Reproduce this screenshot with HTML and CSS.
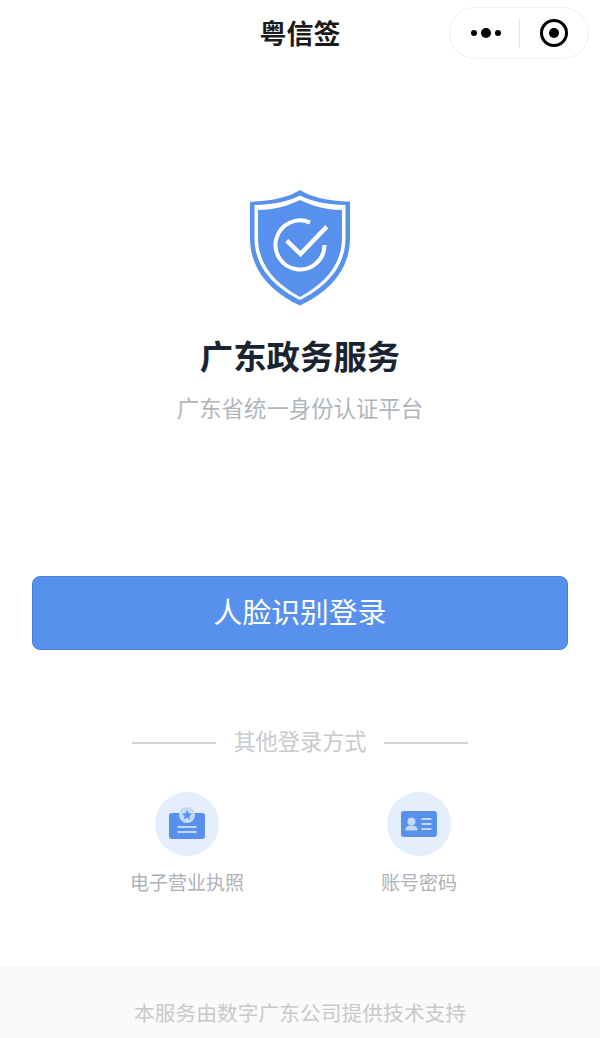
FILE: index.html
```html
<!DOCTYPE html>
<html lang="zh-CN">
<head>
    <meta charset="UTF-8">
    <meta name="viewport" content="width=device-width, initial-scale=1.0">
    <title>粤信签</title>
    <link rel="stylesheet" href="styles.css">
</head>
<body>
    <div class="page">
        <header class="navbar">
            <div class="nav-title">粤信签</div>
            <div class="capsule">
                <div class="capsule-more">
                    <span class="dot"></span><span class="dot dot-big"></span><span class="dot"></span>
                </div>
                <div class="capsule-line"></div>
                <div class="capsule-close"><span class="close-inner"></span></div>
            </div>
        </header>

        <section class="brand">
            <svg class="shield" width="102" height="116" viewBox="0 0 102 116">
                <path d="M51 0C40 7 24 11 1 11.700V48C1 80 22 102 51 115.500C80 102 101 80 101 48V11.700C78 11 62 7 51 0Z" fill="#5891ed"/>
                <path d="M51 5.500C40 11 26 14.500 5.500 15V48C5.500 77 25 97 51 110C77 97 96.500 77 96.500 48V15C76 14.500 62 11 51 5.500Z" fill="#fff"/>
                <path d="M51 10C41 15 28 19.500 9 20V48C9 75 27 94 51 107C75 94 93 75 93 48V20C74 19.500 61 15 51 10Z" fill="#5891ed"/>
                <path d="M61 32.600A24.500 24.500 0 1 0 75.500 55" fill="none" stroke="#fff" stroke-width="4"/>
                <path d="M37.700 50.700L51.500 64L77.700 36.700" fill="none" stroke="#fff" stroke-width="4.500"/>
            </svg>
            <h1 class="brand-title">广东政务服务</h1>
            <p class="brand-sub">广东省统一身份认证平台</p>
        </section>

        <button type="button" class="face-button">人脸识别登录</button>

        <div class="other-title">
            <span class="other-line"></span>
            <span class="other-text">其他登录方式</span>
            <span class="other-line"></span>
        </div>

        <div class="login-ways">
            <div class="way">
                <div class="way-icon">
                    <svg width="38" height="34" viewBox="0 0 38 34">
                        <rect x="1" y="6" width="36" height="26" rx="3" fill="#5891ed"/>
                        <circle cx="19" cy="8" r="8" fill="#c3d9f8"/>
                        <path d="M19 3L20.500 6.300L24 6.700L21.400 9L22.100 12.500L19 10.700L15.900 12.500L16.600 9L14 6.700L17.500 6.300Z" fill="#5891ed"/>
                        <rect x="9.500" y="19" width="19" height="2" fill="#c3d9f8"/>
                        <rect x="9.500" y="24" width="19" height="2" fill="#c3d9f8"/>
                    </svg>
                </div>
                <div class="way-name">电子营业执照</div>
            </div>
            <div class="way">
                <div class="way-icon">
                    <svg width="36" height="26" viewBox="0 0 36 26">
                        <rect width="36" height="26" rx="3" fill="#5891ed"/>
                        <circle cx="10.500" cy="10.500" r="4" fill="#c3d9f8"/>
                        <path d="M4.500 18C4.500 15.500 8 14.500 10.500 14.500C13 14.500 16.500 15.500 16.500 18C16.500 19 16 19.500 15 19.500H6C5 19.500 4.500 19 4.500 18Z" fill="#c3d9f8"/>
                        <rect x="20.500" y="7" width="10" height="2" fill="#c3d9f8"/>
                        <rect x="20.500" y="12" width="10" height="2" fill="#c3d9f8"/>
                        <rect x="20.500" y="17" width="10" height="2" fill="#c3d9f8"/>
                    </svg>
                </div>
                <div class="way-name">账号密码</div>
            </div>
        </div>

        <footer class="footer">本服务由数字广东公司提供技术支持</footer>
    </div>
</body>
</html>
```

FILE: styles.css
```css
html, body {
    margin: 0;
    padding: 0;
    background-color: #fff;
}
.page {
    width: 600px;
    height: 1038px;
    overflow: hidden;
    display: flex;
    flex-direction: column;
    font-family: "Noto Sans CJK SC", "Noto Sans", sans-serif;
}

/* top bar */
.navbar {
    height: 68px;
    flex-shrink: 0;
    display: flex;
    align-items: center;
    justify-content: flex-end;
    padding-right: 11px;
    position: relative;
}
.nav-title {
    position: absolute;
    left: 0;
    right: 0;
    top: 13px;
    text-align: center;
    font-size: 27px;
    line-height: 40px;
    font-weight: 700;
    color: #1a1a1a;
}
.capsule {
    width: 138px;
    height: 50px;
    margin-top: -2px;
    border: 1px solid #efefef;
    border-radius: 26px;
    display: flex;
    align-items: center;
}
.capsule-more {
    width: 67px;
    display: flex;
    align-items: center;
    justify-content: center;
    gap: 4px;
    padding-left: 2px;
}
.dot {
    width: 6px;
    height: 6px;
    border-radius: 50%;
    background-color: #000;
}
.dot-big {
    width: 10px;
    height: 10px;
}
.capsule-line {
    width: 1px;
    height: 30px;
    background-color: #e5e5e5;
}
.capsule-close {
    flex: 1;
    display: flex;
    align-items: center;
    justify-content: center;
}
.close-inner {
    width: 28px;
    height: 28px;
    box-sizing: border-box;
    border: 3px solid #000;
    border-radius: 50%;
    position: relative;
}
.close-inner::after {
    content: "";
    position: absolute;
    left: 6px;
    top: 6px;
    width: 10px;
    height: 10px;
    border-radius: 50%;
    background-color: #000;
}

/* logo block */
.brand {
    display: flex;
    flex-direction: column;
    align-items: center;
    padding-top: 122px;
}
.shield {
    display: block;
}
.brand-title {
    margin: 25px 0 0;
    font-size: 33.400px;
    line-height: 48px;
    font-weight: 700;
    color: #1a2430;
}
.brand-sub {
    margin: 11px 0 0;
    font-size: 22.400px;
    line-height: 34px;
    color: #b0b5bd;
}

.face-button {
    display: block;
    flex-shrink: 0;
    width: 536px;
    height: 74px;
    margin: 152px 0 0 32px;
    padding: 0 0 6px;
    border: 1px solid #4c80d8;
    border-radius: 8px;
    background-color: #5891ed;
    color: #fff;
    font-family: inherit;
    font-size: 28.800px;
}

.other-title {
    margin-top: 77px;
    height: 32px;
    display: flex;
    align-items: center;
    justify-content: center;
    gap: 17px;
}
.other-line {
    width: 84px;
    height: 2px;
    background-color: #d4d4d4;
}
.other-text {
    padding-bottom: 6px;
    font-size: 22.200px;
    line-height: 32px;
    color: #c8cacd;
}

.login-ways {
    margin-top: 33px;
    display: flex;
    padding-left: 129px;
    gap: 116px;
}
.way {
    width: 116px;
    display: flex;
    flex-direction: column;
    align-items: center;
}
.way-icon {
    width: 64px;
    height: 64px;
    border-radius: 50%;
    background-color: #e5eefb;
    display: flex;
    align-items: center;
    justify-content: center;
}
.way-name {
    margin-top: 11px;
    font-size: 19px;
    line-height: 30px;
    white-space: nowrap;
    color: #aeb2b8;
}

.footer {
    margin-top: auto;
    height: 72px;
    box-sizing: border-box;
    padding-top: 30px;
    background-color: #fafafa;
    text-align: center;
    font-size: 20.750px;
    line-height: 32px;
    color: #c9c9c9;
}
```
